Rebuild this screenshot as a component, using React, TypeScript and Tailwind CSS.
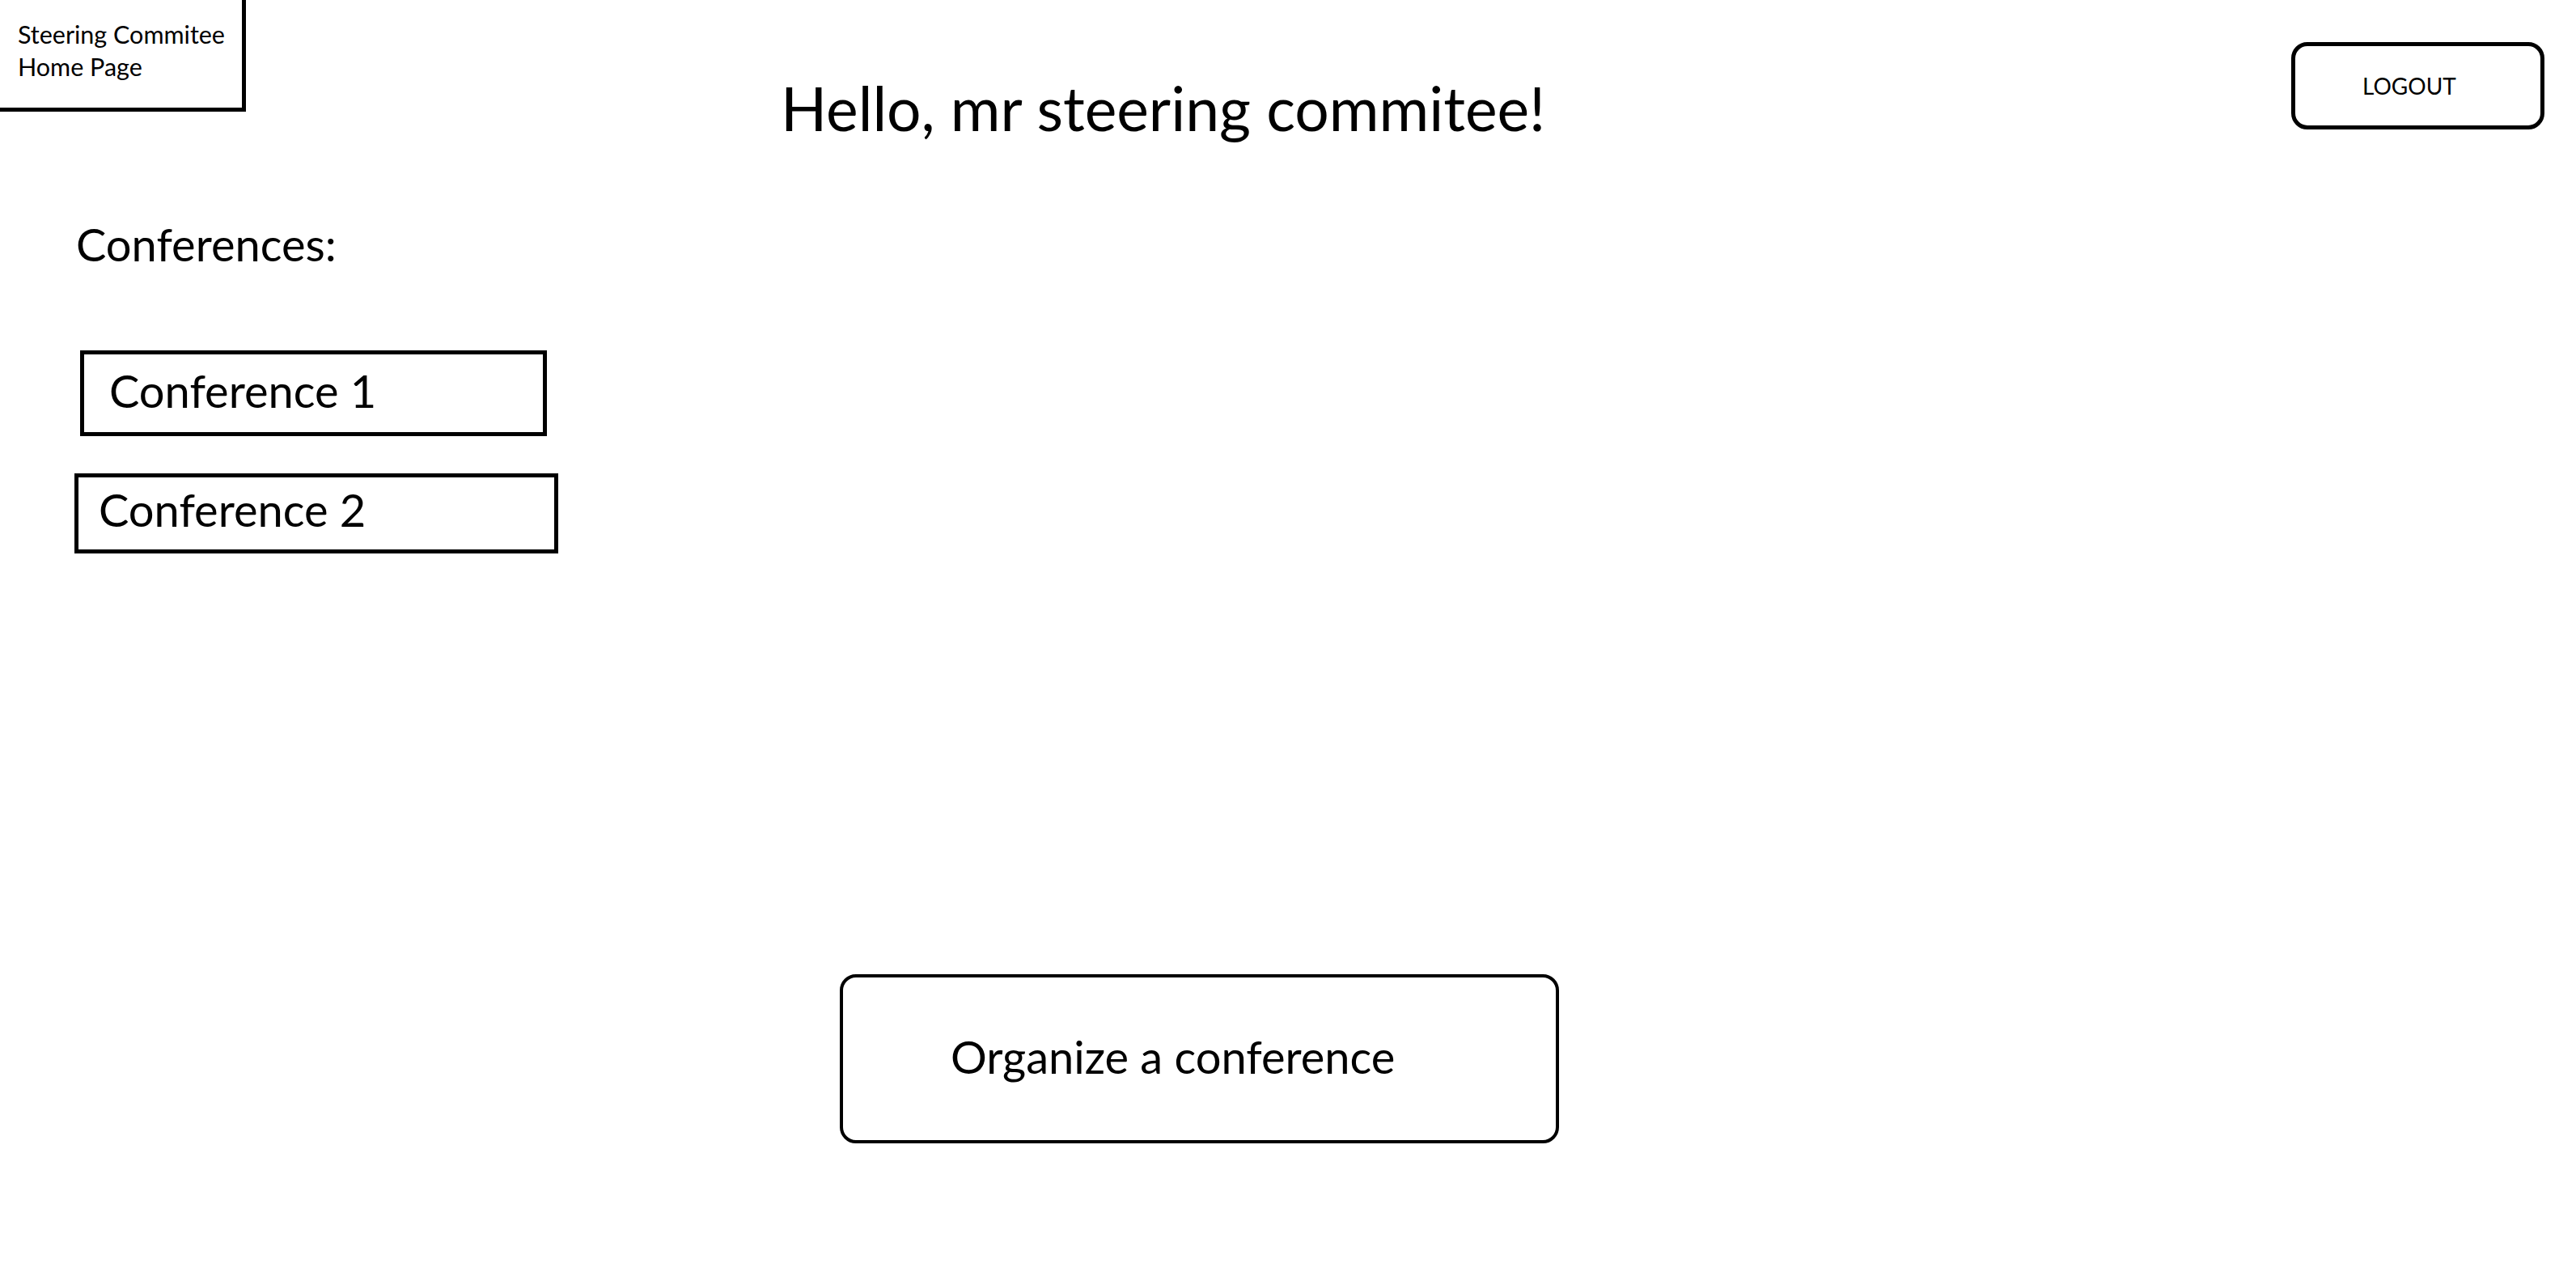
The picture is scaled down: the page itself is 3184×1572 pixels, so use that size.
import React from 'react';

const conferences = [
  { name: 'Conference 1', box: 'ml-[99px] mt-[103px] w-[577px] h-[106px] pt-[17px] pl-[31px]' },
  { name: 'Conference 2', box: 'ml-[92px] mt-[46px] w-[598px] h-[99px] pt-[12px] pl-[25px]' },
];

export default function App() {
  return (
    <div className="min-h-[1572px] w-full bg-white text-black font-['Lato',sans-serif]">
      {/* Header */}
      <header className="flex h-[170px] items-start">
        <div className="h-[138px] w-[304px] shrink-0 border-b-[5px] border-r-[5px] border-black pl-[22px] pt-[22px] text-[30.5px] leading-[40px]">
          <div>Steering Commitee</div>
          <div>Home Page</div>
        </div>
        <h1 className="ml-[661px] mt-[96px] text-[75px] font-normal leading-none whitespace-nowrap">
          Hello, mr steering commitee!
        </h1>
        <button className="ml-auto mr-[39px] mt-[52px] flex h-[108px] w-[313px] shrink-0 items-center rounded-[20px] border-[5px] border-black pl-[83px] text-[28px] leading-none">
          LOGOUT
        </button>
      </header>

      {/* Conference list */}
      <section>
        <h2 className="ml-[94px] mt-[104px] text-[56px] font-normal leading-none">Conferences:</h2>
        {conferences.map((c) => (
          <div key={c.name} className={`border-[5px] border-black text-[56px] leading-none ${c.box}`}>
            {c.name}
          </div>
        ))}
      </section>

      {/* Main action */}
      <button className="ml-[1038px] mt-[520px] flex h-[209px] w-[889px] items-center rounded-[20px] border-[4px] border-black pb-[6px] pl-[133px] text-[56px] leading-none">
        Organize a conference
      </button>
    </div>
  );
}
